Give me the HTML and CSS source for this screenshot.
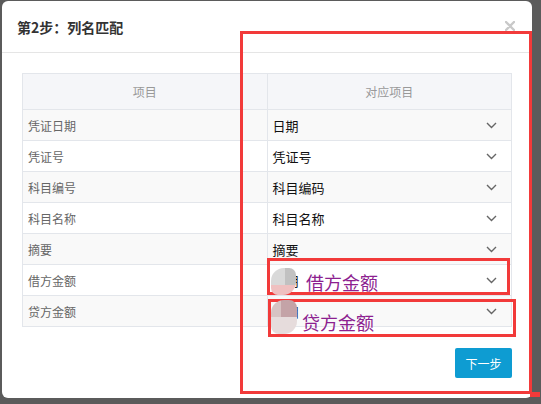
FILE: index.html
```html
<!DOCTYPE html>
<html lang="zh-CN">
<head>
<meta charset="utf-8">
<title>第2步：列名匹配</title>
<link rel="stylesheet" href="styles.css">
</head>
<body>
<div class="modal">
  <div class="modal-header">
    <h3 class="title">第2步：列名匹配</h3>
    <span class="close"><svg width="10" height="10" viewBox="0 0 10 10"><path d="M1 1L9 9M9 1L1 9" stroke="#c9c9c9" stroke-width="2.4" stroke-linecap="round"/></svg></span>
  </div>
  <div class="modal-body">
    <table class="map">
      <thead>
        <tr><th>项目</th><th>对应项目</th></tr>
      </thead>
      <tbody>
        <tr><td class="src">凭证日期</td><td class="dst"><div class="sel"><span>日期</span><svg class="chev" width="11" height="7" viewBox="0 0 11 7"><path d="M1 1L5.5 5.5L10 1" fill="none" stroke="#666" stroke-width="1.4"/></svg></div></td></tr>
        <tr><td class="src">凭证号</td><td class="dst"><div class="sel"><span>凭证号</span><svg class="chev" width="11" height="7" viewBox="0 0 11 7"><path d="M1 1L5.5 5.5L10 1" fill="none" stroke="#666" stroke-width="1.4"/></svg></div></td></tr>
        <tr><td class="src">科目编号</td><td class="dst"><div class="sel"><span>科目编码</span><svg class="chev" width="11" height="7" viewBox="0 0 11 7"><path d="M1 1L5.5 5.5L10 1" fill="none" stroke="#666" stroke-width="1.4"/></svg></div></td></tr>
        <tr><td class="src">科目名称</td><td class="dst"><div class="sel"><span>科目名称</span><svg class="chev" width="11" height="7" viewBox="0 0 11 7"><path d="M1 1L5.5 5.5L10 1" fill="none" stroke="#666" stroke-width="1.4"/></svg></div></td></tr>
        <tr><td class="src">摘要</td><td class="dst"><div class="sel"><span>摘要</span><svg class="chev" width="11" height="7" viewBox="0 0 11 7"><path d="M1 1L5.5 5.5L10 1" fill="none" stroke="#666" stroke-width="1.4"/></svg></div></td></tr>
        <tr><td class="src">借方金额</td><td class="dst"><div class="sel"><span>日期</span><svg class="chev" width="11" height="7" viewBox="0 0 11 7"><path d="M1 1L5.5 5.5L10 1" fill="none" stroke="#666" stroke-width="1.4"/></svg></div></td></tr>
        <tr><td class="src">贷方金额</td><td class="dst"><div class="sel"><span>日期</span><svg class="chev" width="11" height="7" viewBox="0 0 11 7"><path d="M1 1L5.5 5.5L10 1" fill="none" stroke="#666" stroke-width="1.4"/></svg></div></td></tr>
      </tbody>
    </table>
    <div class="actions">
      <button class="btn-next" type="button">下一步</button>
    </div>
  </div>
</div>

<div class="mark mark-big"></div>
<div class="mark mark-stub"></div>
<div class="mark mark-row1"></div>
<div class="mark mark-row2"></div>
<div class="blob blob1"></div>
<div class="blob blob2"></div>
<span class="note note1">借方金额</span>
<span class="note note2">贷方金额</span>
</body>
</html>
```

FILE: styles.css
```css
html, body {
  margin: 0;
  padding: 0;
}
body {
  background: #5b5b5b;
  width: 541px;
  height: 404px;
  overflow: hidden;
  font-family: "Noto Sans CJK SC", "Noto Sans", sans-serif;
  position: relative;
}
.modal {
  margin: 1px 0 0 2px;
  width: 530px;
  height: 397px;
  background: #fff;
  border-radius: 6px;
  display: flex;
  flex-direction: column;
}
.modal-header {
  height: 51px;
  border-bottom: 1px solid #e5e5e5;
  display: flex;
  align-items: center;
  justify-content: space-between;
  padding: 0 17px 0 15px;
}
.title {
  margin: 0;
  font-size: 14px;
  font-weight: bold;
  color: #333;
  line-height: 20px;
}
.close {
  display: flex;
  margin-top: -2px;
}
.modal-body {
  padding: 20px;
}
.map {
  width: 490px;
  border-collapse: collapse;
  table-layout: fixed;
  font-size: 12px;
}
.map th, .map td {
  border: 1px solid #e3e6eb;
  padding: 0;
}
.map th {
  height: 35px;
  background: #f5f6f9;
  color: #999;
  font-weight: normal;
  text-align: center;
}
.map td {
  height: 30px;
}
.map tbody tr:nth-child(odd) td {
  background: #f9f9f9;
}
.map tbody tr:nth-child(even) td {
  background: #fff;
}
.src {
  color: #666;
  padding-left: 5px !important;
}
.sel {
  display: flex;
  align-items: center;
  justify-content: space-between;
  padding: 0 14px 0 5px;
  font-size: 13px;
  color: #111;
}
.chev {
  display: block;
}
.actions {
  display: flex;
  justify-content: flex-end;
  margin-top: 21px;
}
.btn-next {
  width: 57px;
  height: 30px;
  border: none;
  border-radius: 2px;
  background: #0e9cd2;
  color: #fff;
  font-family: "Noto Sans CJK SC", sans-serif;
  font-size: 12px;
  padding: 0;
}

/* annotation overlays */
.mark {
  position: absolute;
  box-sizing: border-box;
  border: 3px solid #f23a3a;
}
.mark-big {
  left: 240px;
  top: 31px;
  width: 292px;
  height: 363px;
}
.mark-stub {
  left: 530px;
  top: 392px;
  width: 10px;
  height: 5px;
  border: none;
  background: #f23a3a;
}
.mark-row1 {
  left: 267px;
  top: 258px;
  width: 243px;
  height: 37px;
}
.mark-row2 {
  left: 268px;
  top: 299px;
  width: 248px;
  height: 38px;
}
.blob {
  position: absolute;
}
.blob1 {
  left: 271px;
  top: 268px;
  width: 25px;
  height: 27px;
  border-radius: 13px 7px 13px 7px;
  background:
    linear-gradient(to right, #d9d9d9 0, #d9d9d9 14px, #c1c1c1 14px) top / 100% 17px no-repeat,
    #efc0c0;
}
.blob2 {
  left: 271px;
  top: 300px;
  width: 26px;
  height: 34px;
  border-radius: 13px 8px 13px 8px;
  background:
    linear-gradient(to right, #d7c3c3 0, #d7c3c3 10px, #c4a3a7 10px) top / 100% 17px no-repeat,
    #e6dcdc;
}
.note {
  position: absolute;
  font-size: 18px;
  line-height: 20px;
  color: #8d1f90;
  font-family: "Noto Sans CJK SC", sans-serif;
}
.note1 {
  left: 306px;
  top: 272px;
}
.note2 {
  left: 302px;
  top: 312px;
}
```
